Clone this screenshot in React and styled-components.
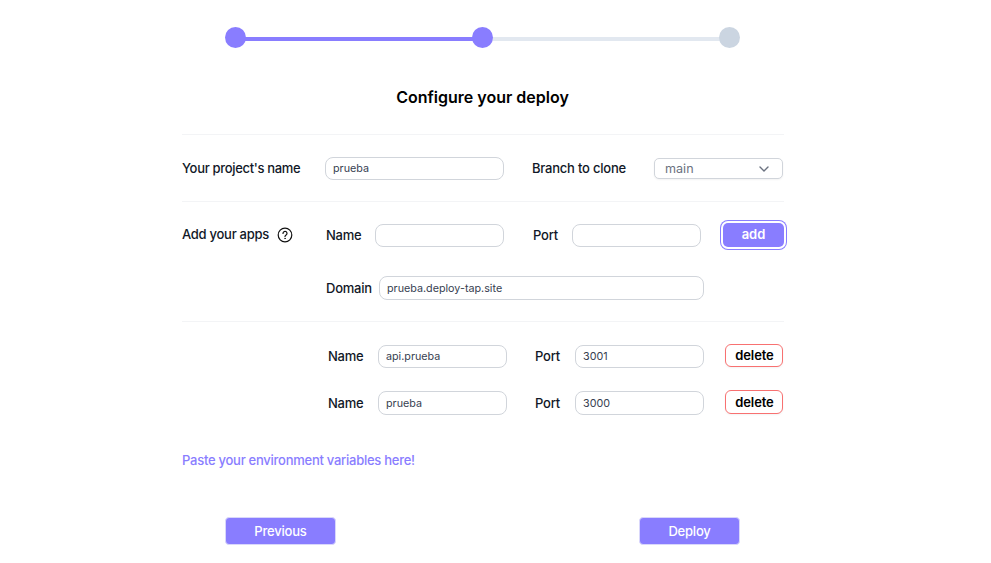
import React from "react";
import styled, { createGlobalStyle } from "styled-components";

const GlobalStyle = createGlobalStyle`
  *, *::before, *::after { box-sizing: border-box; }
  body { margin: 0; background: #fff; color: #111827; font-family: Inter, sans-serif; font-size: 13px; line-height: 20px; }
  button, input { font-family: inherit; margin: 0; }
`;

const Page = styled.main`
  width: 602px;
  height: 563px;
  margin-left: 182px;
  padding-top: 27px;
`;

const Stepper = styled.div`
  display: flex;
  align-items: flex-start;
  width: 515px;
  height: 21px;
  margin-left: 43px;
`;

const Step = styled.span`
  position: relative;
  z-index: 1;
  flex: none;
  width: 21px;
  height: 21px;
  border-radius: 50%;
  background: ${(p) => (p.$done ? "#897dff" : "#cbd5e1")};
`;

const Track = styled.span`
  flex: 1;
  height: 4px;
  margin: 10px -2px 0;
  background: ${(p) => (p.$done ? "#897dff" : "#e2e8f0")};
`;

const Title = styled.h1`
  margin: 37px 0 0;
  height: 49px;
  padding-right: 1px;
  font-size: 16px;
  line-height: 24px;
  font-weight: 600;
  color: #000;
  text-align: center;
`;

const Section = styled.section`
  height: ${(p) => p.$height}px;
  border-top: 1px solid #f3f4f6;
  padding-top: ${(p) => p.$top}px;
`;

const Row = styled.div`
  display: grid;
  grid-template-columns: ${(p) => p.$columns};
  align-items: start;
  height: ${(p) => p.$height}px;
  margin-left: ${(p) => p.$indent ?? 0}px;
`;

const Label = styled.label`
  margin-top: ${(p) => p.$top ?? 1}px;
  font-weight: 500;
  letter-spacing: ${(p) => p.$tracking ?? -0.22}px;
  white-space: nowrap;
`;

const HelpLabel = styled.div`
  display: flex;
  align-items: center;
  gap: 8px;
  font-weight: 500;
  letter-spacing: -0.27px;
  svg { display: block; margin-top: 1px; }
`;

const Input = styled.input`
  width: ${(p) => p.$width ?? 129}px;
  height: ${(p) => p.$height ?? 23}px;
  padding: 0 7px;
  border: 1px solid #d1d5db;
  border-radius: 8px;
  outline: none;
  background: #fff;
  color: #374151;
  font-size: 10.75px;
`;

const Select = styled.button`
  display: flex;
  align-items: center;
  justify-content: space-between;
  width: 129px;
  height: 21px;
  margin-top: 1px;
  padding: 0 12px 1px 10px;
  border: 1px solid #d1d5db;
  border-radius: 5px;
  background: #fff;
  box-shadow: 0 1px 2px rgba(0, 0, 0, 0.05);
  color: #6b7280;
  font-size: 12.6px;
  svg { display: block; margin-top: 1px; }
`;

const AddButton = styled.button`
  width: 61px;
  height: 24px;
  margin-top: -1px;
  padding: 0 0 2px;
  border: 0;
  border-radius: 5px;
  background: #897dff;
  box-shadow: 0 0 0 2px #fff, 0 0 0 3px #897dff;
  color: #fff;
  font-size: 13px;
  font-weight: 600;
`;

const DeleteButton = styled.button`
  width: 58px;
  height: ${(p) => p.$height}px;
  margin-top: -1px;
  padding: 0 0 ${(p) => (p.$height % 2 ? 1 : 0)}px 1px;
  border: 1px solid #f87171;
  border-radius: 6px;
  background: #fff;
  box-shadow: 0 1px 2px rgba(0, 0, 0, 0.05);
  color: #000;
  font-size: 13px;
  font-weight: 600;
  letter-spacing: -0.1px;
`;

const EnvLink = styled.button`
  display: block;
  height: 20px;
  padding: 0;
  border: 0;
  background: none;
  color: #897dff;
  font-size: 13px;
  line-height: 20px;
  font-weight: 500;
  letter-spacing: -0.26px;
`;

const Footer = styled.footer`
  display: flex;
  justify-content: space-between;
  width: 515px;
  margin: 47px 0 0 43px;
`;

const NavButton = styled.button`
  width: ${(p) => p.$width}px;
  height: 28px;
  padding: 0;
  border: 1px solid #d9d7fb;
  border-radius: 4px;
  background: #897dff;
  color: #fff;
  font-size: 13px;
  font-weight: 500;
  letter-spacing: -0.2px;
`;

const apps = [
  { name: "api.prueba", port: "3001", rowHeight: 46, height: 23, labelTop: 1 },
  { name: "prueba", port: "3000", rowHeight: 24, height: 24, labelTop: 2 },
];

function HelpIcon() {
  return (
    <svg width="16" height="16" viewBox="0 0 16 16" fill="none" stroke="#111" strokeWidth="1.2" strokeLinecap="round">
      <circle cx="8" cy="8" r="6.8" />
      <path d="M6 6.4a2 2 0 1 1 3.1 1.6C8.4 8.5 8 8.8 8 9.6" />
      <circle cx="8" cy="11.5" r="0.3" strokeWidth="0.8" />
    </svg>
  );
}

function Chevron() {
  return (
    <svg width="12" height="12" viewBox="0 0 12 12" fill="none" stroke="#6b7280" strokeWidth="1.4" strokeLinecap="round" strokeLinejoin="round">
      <path d="M2 4l4 4 4-4" />
    </svg>
  );
}

export default function App() {
  return (
    <>
      <GlobalStyle />
      <Page>
        <Stepper>
          <Step $done />
          <Track $done />
          <Step $done />
          <Track />
          <Step />
        </Stepper>
        <Title>Configure your deploy</Title>
        <Section $height={67} $top={22}>
          <Row $columns="143px 207px 122px 130px" $height={24}>
            <Label $tracking={-0.32}>Your project's name</Label>
            <Input $width={179} defaultValue="prueba" />
            <Label>Branch to clone</Label>
            <Select type="button">
              main
              <Chevron />
            </Select>
          </Row>
        </Section>
        <Section $height={120} $top={22}>
          <Row $columns="144px 49px 158px 39px 151px 61px" $height={52}>
            <HelpLabel>
              Add your apps
              <HelpIcon />
            </HelpLabel>
            <Label>Name</Label>
            <Input />
            <Label>Port</Label>
            <Input />
            <AddButton type="button">add</AddButton>
          </Row>
          <Row $columns="53px 325px" $height={24} $indent={144}>
            <Label $top={2}>Domain</Label>
            <Input $width={325} $height={24} defaultValue="prueba.deploy-tap.site" />
          </Row>
        </Section>
        <Section $height={129} $top={23}>
          {apps.map((app) => (
            <Row key={app.name} $columns="50px 157px 40px 150px 58px" $height={app.rowHeight} $indent={146}>
              <Label $top={app.labelTop}>Name</Label>
              <Input $height={app.height} defaultValue={app.name} />
              <Label $top={app.labelTop}>Port</Label>
              <Input $height={app.height} defaultValue={app.port} />
              <DeleteButton type="button" $height={app.height}>delete</DeleteButton>
            </Row>
          ))}
        </Section>
        <EnvLink type="button">Paste your environment variables here!</EnvLink>
        <Footer>
          <NavButton type="button" $width={111}>Previous</NavButton>
          <NavButton type="button" $width={101}>Deploy</NavButton>
        </Footer>
      </Page>
    </>
  );
}
